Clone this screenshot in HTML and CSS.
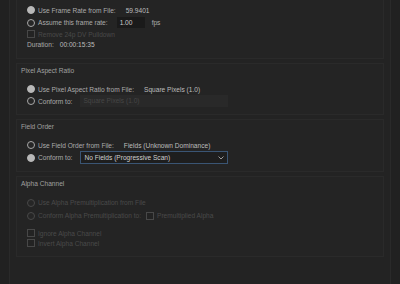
FILE: index.html
```html
<!DOCTYPE html>
<html lang="en">
<head>
<meta charset="UTF-8">
<title>Interpret Footage</title>
<link rel="stylesheet" href="styles.css">
</head>
<body>
    <div class="panel">
        <div class="group first">
            <div class="row">
                <span class="radio on"></span>
                <span class="label">Use Frame Rate from File:</span>
                <span class="value">59.9401</span>
            </div>
            <div class="row tall">
                <span class="radio"></span>
                <span class="label">Assume this frame rate:</span>
                <span class="field">1.00</span>
                <span class="unit">fps</span>
            </div>
            <div class="row short off">
                <span class="check"></span>
                <span class="label">Remove 24p DV Pulldown</span>
            </div>
            <div class="row short plain">
                <span class="label">Duration:</span>
                <span class="value small-gap">00:00:15:35</span>
            </div>
        </div>

        <div class="group">
            <div class="title">Pixel Aspect Ratio</div>
            <div class="row">
                <span class="radio on"></span>
                <span class="label">Use Pixel Aspect Ratio from File:</span>
                <span class="value">Square Pixels (1.0)</span>
            </div>
            <div class="row">
                <span class="radio"></span>
                <span class="label">Conform to:</span>
                <span class="select disabled">Square Pixels (1.0)</span>
            </div>
        </div>

        <div class="group">
            <div class="title">Field Order</div>
            <div class="row">
                <span class="radio"></span>
                <span class="label">Use Field Order from File:</span>
                <span class="value">Fields (Unknown Dominance)</span>
            </div>
            <div class="row tall">
                <span class="radio on"></span>
                <span class="label">Conform to:</span>
                <span class="select active">No Fields (Progressive Scan)
                    <svg class="chev" width="6" height="4" viewBox="0 0 6 4"><path d="M0.5 0.5 L3 3 L5.5 0.5" fill="none" stroke="#9a9a9a" stroke-width="1"/></svg>
                </span>
            </div>
        </div>

        <div class="group alpha">
            <div class="title">Alpha Channel</div>
            <div class="row tall off">
                <span class="radio"></span>
                <span class="label">Use Alpha Premultiplication from File</span>
            </div>
            <div class="row tall off">
                <span class="radio"></span>
                <span class="label">Conform Alpha Premultiplication to:</span>
                <span class="check inline"></span>
                <span class="label">Premultiplied Alpha</span>
            </div>
            <div class="row short off spaced">
                <span class="check"></span>
                <span class="label">Ignore Alpha Channel</span>
            </div>
            <div class="row short off">
                <span class="check"></span>
                <span class="label">Invert Alpha Channel</span>
            </div>
        </div>
    </div>
</body>
</html>
```

FILE: styles.css
```css
body {
    margin: 0;
    background-color: #212121;
    font-family: 'Liberation Sans', Arial, sans-serif;
    font-size: 6.6px;
    color: #ababab;
    height: 284px;
    overflow: hidden;
}
.panel {
    margin-left: 9px;
    width: 382px;
    height: 284px;
    background-color: #232323;
    border-left: 1px solid #2a2a2a;
    border-right: 1px solid #2a2a2a;
    padding: 0 6px;
    box-sizing: border-box;
}
.group {
    border: 1px solid #2a2a2a;
    background-color: #242424;
    padding: 0 0 7px 0;
    margin-bottom: 4px;
}
.group.first {
    border-top: none;
    padding-top: 4px;
    padding-bottom: 9px;
}
.group.alpha {
    padding-bottom: 8px;
}
.title {
    height: 14px;
    line-height: 14px;
    padding-left: 4px;
    color: #a0a0a0;
    margin-bottom: 5px;
}
.row {
    display: flex;
    align-items: center;
    height: 12px;
    padding-left: 10px;
}
.row.tall {
    height: 13px;
}
.row.short {
    height: 10px;
}
.row.spaced {
    margin-top: 6px;
}
.row.plain .label {
    margin-left: 0;
}
.label {
    margin-left: 3px;
    white-space: nowrap;
}
.value {
    margin-left: 10px;
    color: #bdbdbd;
    white-space: nowrap;
}
.value.small-gap {
    margin-left: 6px;
}
.off .label {
    color: #4a4a4a;
}
.radio {
    width: 6px;
    height: 6px;
    border-radius: 50%;
    border: 1px solid #a8a8a8;
    background-color: #262626;
    flex-shrink: 0;
}
.radio.on {
    background-color: #b8b8b8;
    border-color: #b8b8b8;
}
.off .radio {
    border-color: #484848;
}
.check {
    width: 6px;
    height: 6px;
    border: 1px solid #484848;
    background-color: #232323;
    flex-shrink: 0;
}
.check.inline {
    margin-left: 5px;
}
.field {
    margin-left: 9px;
    width: 28px;
    height: 11px;
    line-height: 11px;
    background-color: #1a1a1a;
    color: #cccccc;
    padding-left: 3px;
    box-sizing: border-box;
}
.unit {
    margin-left: 7px;
}
.select {
    margin-left: 8px;
    width: 148px;
    height: 12px;
    line-height: 12px;
    box-sizing: border-box;
    padding-left: 3px;
    display: flex;
    align-items: center;
    justify-content: space-between;
}
.select.disabled {
    background-color: #292929;
    color: #464646;
}
.select.active {
    height: 13px;
    background-color: #1e1e1e;
    border: 1px solid #3a5574;
    color: #cfcfcf;
    padding-right: 3px;
}
.chev {
    flex-shrink: 0;
}
```
